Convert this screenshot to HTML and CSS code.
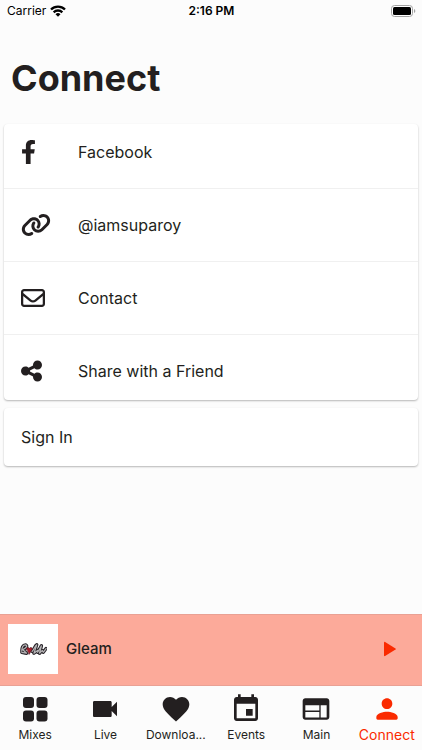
FILE: index.html
```html
<!DOCTYPE html>
<html lang="en">
<head>
    <meta charset="UTF-8">
    <meta name="viewport" content="width=device-width, initial-scale=1.0">
    <title>Connect</title>
    <link rel="stylesheet" href="styles.css">
</head>
<body>
    <div class="status-bar">
        <div class="carrier">
            <span>Carrier</span>
            <svg width="16" height="12" viewBox="0 0 16 12" fill="none" stroke="#000" stroke-width="2.4">
                <path d="M1 4.5a10 10 0 0 1 14 0"/>
                <path d="M3.7 7.3a6.100 6.100 0 0 1 8.600 0"/>
                <path d="M8 11.800L5.500 9.300a3.500 3.500 0 0 1 5 0z" fill="#000" stroke="none"/>
            </svg>
        </div>
        <div class="clock">2:16 PM</div>
        <div class="battery">
            <svg width="25" height="12" viewBox="0 0 25 12">
                <rect x=".5" y=".5" width="21" height="11" rx="3" fill="#fff" stroke="#a3a3a3"/>
                <rect x="2" y="2" width="18" height="8" rx="1.500" fill="#000"/>
                <path d="M23 4v4c1.800-.6 1.800-3.400 0-4z" fill="#a3a3a3"/>
            </svg>
        </div>
    </div>

    <main>
        <h1>Connect</h1>

        <div class="card links">
            <a class="row" href="#facebook">
                <span class="row-icon">
                    <svg width="15" height="24" viewBox="0 0 320 512"><path d="M279.140 288l14.220-92.660h-88.910v-60.130c0-25.350 12.420-50.060 52.240-50.060h40.420V6.260S260.430 0 225.360 0c-73.220 0-121.080 44.380-121.080 124.720v70.620H22.890V288h81.390v224h100.170V288z"/></svg>
                </span>
                <span>Facebook</span>
            </a>
            <a class="row" href="#profile">
                <span class="row-icon">
                    <svg width="30" height="24" viewBox="0 0 640 512"><path d="M579.800 267.700c56.500-56.500 56.500-148 0-204.500c-50-50-128.800-56.500-186.300-15.400l-1.600 1.100c-14.400 10.300-17.700 30.300-7.400 44.600s30.300 17.700 44.600 7.400l1.600-1.100c32.100-22.900 76-19.300 103.800 8.600c31.500 31.500 31.500 82.500 0 114L422.300 334.800c-31.500 31.500-82.500 31.500-114 0c-27.900-27.900-31.500-71.800-8.600-103.800l1.100-1.600c10.300-14.400 6.900-34.400-7.400-44.600s-34.400-6.900-44.600 7.400l-1.100 1.600C206.500 251.200 213 330 263 380c56.500 56.500 148 56.500 204.500 0L579.800 267.700zM60.200 244.300c-56.500 56.500-56.500 148 0 204.500c50 50 128.800 56.500 186.300 15.400l1.600-1.100c14.400-10.300 17.700-30.300 7.400-44.600s-30.300-17.700-44.600-7.400l-1.600 1.100c-32.100 22.900-76 19.300-103.800-8.600C74 372 74 321 105.500 289.500L217.700 177.200c31.500-31.500 82.500-31.500 114 0c27.900 27.900 31.500 71.800 8.600 103.900l-1.100 1.600c-10.300 14.400-6.900 34.400 7.400 44.600s34.400 6.900 44.600-7.400l1.100-1.600C433.500 260.800 427 182 377 132c-56.500-56.500-148-56.500-204.500 0L60.200 244.300z"/></svg>
                </span>
                <span>@iamsuparoy</span>
            </a>
            <a class="row" href="#contact">
                <span class="row-icon">
                    <svg width="24" height="24" viewBox="0 0 512 512"><path d="M64 112c-8.800 0-16 7.200-16 16v22.100L220.500 291.700c20.700 17 50.400 17 71.100 0L464 150.100V128c0-8.800-7.200-16-16-16H64zM48 212.200V384c0 8.800 7.200 16 16 16H448c8.800 0 16-7.200 16-16V212.200L322 328.800c-38.400 31.500-93.700 31.500-132 0L48 212.200zM0 128C0 92.700 28.700 64 64 64H448c35.300 0 64 28.700 64 64V384c0 35.300-28.700 64-64 64H64c-35.300 0-64-28.700-64-64V128z"/></svg>
                </span>
                <span>Contact</span>
            </a>
            <a class="row" href="#share">
                <span class="row-icon">
                    <svg width="21" height="24" viewBox="0 0 448 512"><path d="M352 224c53 0 96-43 96-96s-43-96-96-96s-96 43-96 96c0 4 .2 8 .7 11.900l-94.100 47C145.400 170.200 121.900 160 96 160c-53 0-96 43-96 96s43 96 96 96c25.900 0 49.400-10.200 66.600-26.900l94.100 47c-.5 3.900-.7 7.800-.7 11.900c0 53 43 96 96 96s96-43 96-96s-43-96-96-96c-25.900 0-49.400 10.200-66.600 26.900l-94.100-47c.5-3.900 .7-7.800 .7-11.900s-.2-8-.7-11.900l94.100-47C302.600 213.800 326.100 224 352 224z"/></svg>
                </span>
                <span>Share with a Friend</span>
            </a>
        </div>

        <button class="card sign-in" type="button">Sign In</button>
    </main>

    <div class="player">
        <div class="cover">
            <svg width="28" height="15" viewBox="0 0 30 16" fill="none" stroke-linecap="round" stroke-linejoin="round">
                <g stroke="#29252a" stroke-width="3.600">
                    <path d="M3 10c0-4 1-7 4-7 3 1 0 4-3 5l4 4-5-1"/>
                    <path d="M14 10c2-1 3-6 5-7l-3 9 4-3M20 11l4-7-2 8 3-3 1 2 3-4"/>
                </g>
                <g stroke="#b5b3b5" stroke-width="1.300">
                    <path d="M3 10c0-4 1-7 4-7 3 1 0 4-3 5l4 4-5-1"/>
                    <path d="M14 10c2-1 3-6 5-7l-3 9 4-3M20 11l4-7-2 8 3-3 1 2 3-4"/>
                </g>
                <path d="M8 7c1-2 3-1 3 0 1-2 4-1 3 1l-3 5z" fill="#a51e2c" stroke="#491c24" stroke-width=".7"/>
            </svg>
        </div>
        <span class="track">Gleam</span>
        <button class="play" type="button" aria-label="Play">
            <svg width="14" height="16" viewBox="0 0 14 16"><path d="M1 1.500v13c0 .6.600.800 1.100.5L12.500 8.600c.5-.4.500-.8 0-1.200L2.100 1C1.600.7 1 .9 1 1.500z"/></svg>
        </button>
    </div>

    <nav>
        <a class="tab" href="#mixes">
            <svg viewBox="0 0 32 32"><rect x="4" y="4" width="11" height="11" rx="3"/><rect x="17.500" y="4" width="11" height="11" rx="3"/><rect x="4" y="17.500" width="11" height="11" rx="3"/><rect x="17.500" y="17.500" width="11" height="11" rx="3"/></svg>
            <span>Mixes</span>
        </a>
        <a class="tab" href="#live">
            <svg viewBox="0 0 24 24"><path d="M17 10.500V7c0-.55-.45-1-1-1H4c-.55 0-1 .45-1 1v10c0 .55.45 1 1 1h12c.55 0 1-.45 1-1v-3.500l4 4v-11l-4 4z"/></svg>
            <span>Live</span>
        </a>
        <a class="tab" href="#downloads">
            <svg viewBox="0 0 24 24"><path d="M12 21.350l-1.450-1.320C5.400 15.360 2 12.280 2 8.500 2 5.420 4.420 3 7.500 3c1.740 0 3.410.81 4.500 2.090C13.090 3.810 14.760 3 16.500 3 19.580 3 22 5.420 22 8.500c0 3.780-3.400 6.860-8.550 11.540L12 21.350z"/></svg>
            <span>Downloa...</span>
        </a>
        <a class="tab" href="#events">
            <svg viewBox="0 0 24 24"><path d="M17 12h-5v5h5v-5zM16 1v2H8V1H6v2H5c-1.110 0-1.990.9-1.990 2L3 19c0 1.100.89 2 2 2h14c1.100 0 2-.9 2-2V5c0-1.100-.9-2-2-2h-1V1h-2zm3 18H5V8h14v11z"/></svg>
            <span>Events</span>
        </a>
        <a class="tab" href="#main">
            <svg viewBox="0 0 24 24"><path d="M20 4H4c-1.100 0-2 .9-2 2v12c0 1.100.9 2 2 2h16c1.100 0 2-.9 2-2V6c0-1.100-.9-2-2-2zm-5.500 14.400H4V14.200h10.500v4.200zm0-5.200H4V9.200h10.500v4zm5.500 5.200h-4.500V9.200H20v9.200z"/></svg>
            <span>Main</span>
        </a>
        <a class="tab active" href="#connect">
            <svg viewBox="0 0 24 24"><path d="M12 12c2.210 0 4-1.790 4-4s-1.790-4-4-4-4 1.790-4 4 1.790 4 4 4zm0 2c-2.670 0-8 1.340-8 4v1c0 .55.45 1 1 1h14c.55 0 1-.45 1-1v-1c0-2.660-5.330-4-8-4z"/></svg>
            <span>Connect</span>
        </a>
    </nav>
</body>
</html>
```

FILE: styles.css
```css
* {
    box-sizing: border-box;
}

body {
    display: flex;
    flex-direction: column;
    min-height: 100vh;
    margin: 0;
    background: #fcfcfc;
    color: #231f20;
    font-family: Inter, "Liberation Sans", sans-serif;
    font-size: 16px;
    line-height: 20px;
}

a {
    color: inherit;
    text-decoration: none;
}

button {
    border: none;
    color: inherit;
    font: inherit;
    cursor: pointer;
}

svg {
    display: block;
    fill: currentColor;
}

.status-bar {
    display: grid;
    grid-template-columns: 1fr auto 1fr;
    align-items: center;
    height: 22px;
    padding: 0 6px 0 7px;
    color: #000;
    font-size: 12px;
}

.carrier {
    display: flex;
    align-items: center;
    gap: 4px;
}

.carrier svg,
.cover svg {
    fill: none;
}

.clock {
    font-weight: 600;
}

.battery {
    justify-self: end;
}

main {
    flex: 1;
    padding: 32px 4px 24px;
}

h1 {
    margin: 0 0 22px;
    padding-left: 7px;
    font-size: 36px;
    line-height: 48px;
    font-weight: 700;
}

.card {
    display: block;
    width: 100%;
    background: #fff;
    border-radius: 4px;
    box-shadow: 0 1px 2px rgba(0, 0, 0, 0.28);
}

.links {
    margin-bottom: 8px;
}

.row {
    display: flex;
    align-items: center;
    padding: 24px 17px;
    border-bottom: 1px solid #f0f0f0;
}

.row:first-child {
    padding-top: 16px;
}

.row:last-child {
    padding-bottom: 17px;
    border-bottom: none;
}

.row-icon {
    width: 57px;
}

.sign-in {
    padding: 19px 17px;
    text-align: left;
}

.player {
    display: flex;
    align-items: center;
    gap: 8px;
    height: 72px;
    padding: 0 16px 2px 8px;
    background: #fcaa9a;
    border-top: 1px solid #e9a194;
    border-bottom: 1px solid #e9a194;
}

.cover {
    display: flex;
    align-items: center;
    justify-content: center;
    width: 50px;
    height: 50px;
    background: #fff;
}

.track {
    flex: 1;
    font-size: 15px;
    font-weight: 500;
}

.play {
    display: flex;
    align-items: center;
    justify-content: center;
    width: 32px;
    height: 32px;
    padding: 0;
    background: none;
    color: #fa2a00;
}

nav {
    display: flex;
    height: 64px;
    padding-top: 7px;
}

.tab {
    display: flex;
    flex: 1;
    flex-direction: column;
    align-items: center;
    min-width: 0;
    font-size: 12px;
}

.tab svg {
    width: 32px;
    height: 32px;
}

.active {
    color: #fa2a00;
    font-size: 14px;
}
```
